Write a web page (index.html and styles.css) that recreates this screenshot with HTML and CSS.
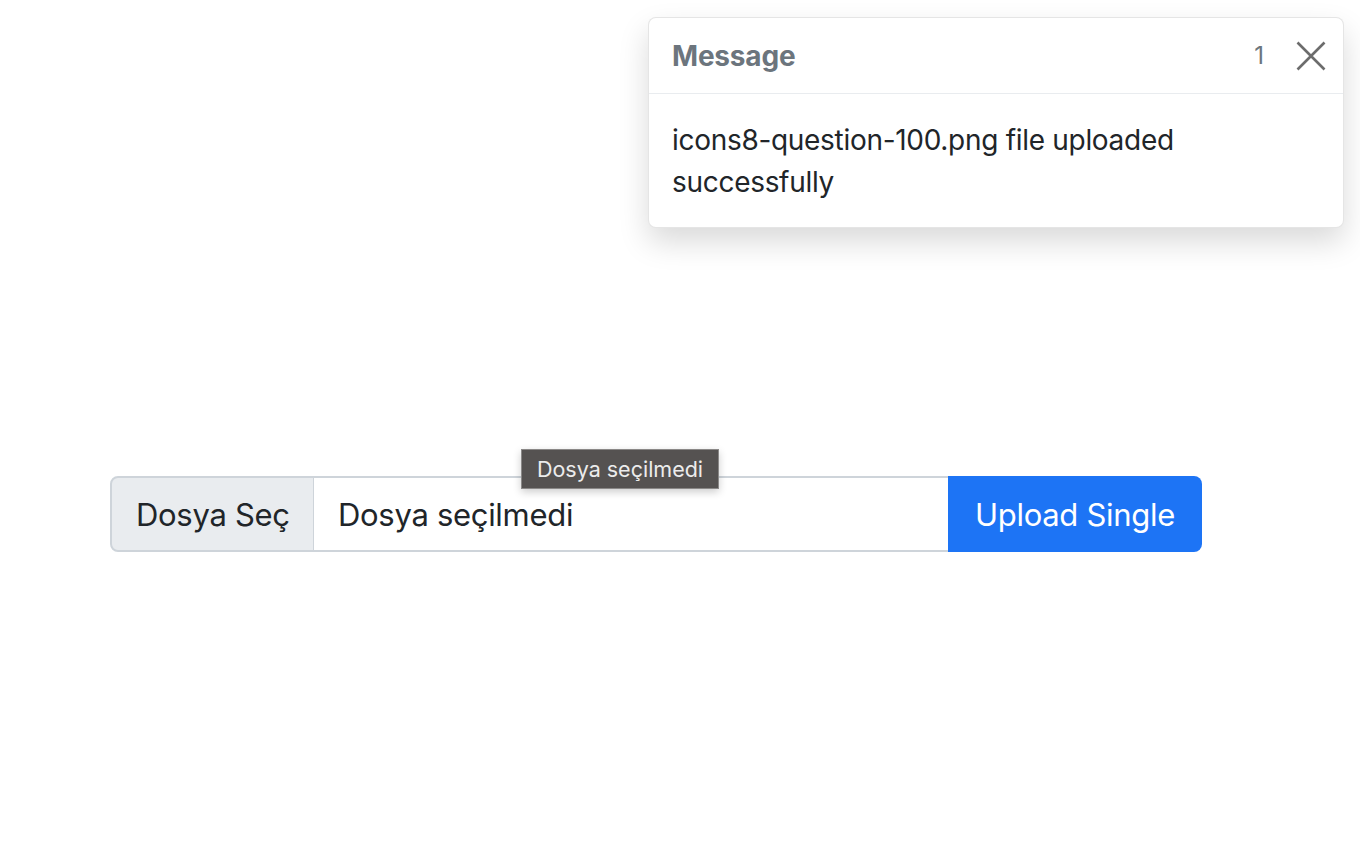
FILE: index.html
```html
<!DOCTYPE html>
<html lang="tr">
<head>
<meta charset="utf-8">
<title>Upload</title>
<link rel="stylesheet" href="styles.css">
</head>
<body>
<div class="toast-wrap">
  <div class="toast">
    <div class="toast-header">
      <strong class="toast-title">Message</strong>
      <small class="toast-count">1</small>
      <button class="btn-close" aria-label="Close">
        <svg width="30" height="30" viewBox="0 0 30 30"><path d="M1.5 1.5 L28.5 28.5 M28.5 1.5 L1.5 28.5" stroke="#6c6c6c" stroke-width="2.6" fill="none"/></svg>
      </button>
    </div>
    <div class="toast-body">icons8-question-100.png file uploaded successfully</div>
  </div>
</div>

<main class="main">
  <form class="input-group">
    <label class="file-btn">Dosya Seç</label>
    <div class="file-name">Dosya seçilmedi</div>
    <button type="button" class="btn-primary">Upload Single</button>
    <div class="tooltip">Dosya seçilmedi</div>
  </form>
</main>
</body>
</html>
```
FILE: styles.css
```css
* { box-sizing: border-box; }
html, body { margin: 0; padding: 0; }
body {
  width: 1360px;
  height: 856px;
  background: #fff;
  color: #212529;
  font-family: Inter, "Noto Sans", "Liberation Sans", sans-serif;
  position: relative;
  overflow: hidden;
}

.toast-wrap {
  position: absolute;
  top: 17px;
  right: 16px;
}
.toast {
  width: 696px;
  background: #fff;
  border: 1px solid rgba(0,0,0,0.1);
  border-radius: 8px;
  box-shadow: 0 14px 30px rgba(0,0,0,0.15);
}
.toast-header {
  display: flex;
  align-items: center;
  height: 76px;
  padding: 0 17px 0 23px;
  border-bottom: 1px solid #e9ecef;
  border-radius: 8px 8px 0 0;
}
.toast-title {
  font-size: 28px;
  font-weight: 700;
  color: #6c757d;
  margin-right: auto;
  letter-spacing: -0.2px;
}
.toast-count {
  font-size: 24px;
  color: #6c757d;
  margin-right: 32px;
}
.btn-close {
  border: 0;
  background: transparent;
  padding: 0;
  width: 30px;
  height: 30px;
  display: flex;
  cursor: pointer;
}
.toast-body {
  padding: 25px 60px 24px 23px;
  font-size: 28px;
  line-height: 42px;
  color: #212529;
  letter-spacing: -0.3px;
}

.main {
  padding: 476px 0 0 110px;
}
.input-group {
  position: relative;
  display: flex;
  width: 1092px;
  height: 76px;
  margin: 0;
}
.file-btn {
  display: flex;
  align-items: center;
  width: 204px;
  padding-left: 24px;
  background: #e9ecef;
  border: 2px solid #ced4da;
  border-right-width: 1px;
  border-radius: 8px 0 0 8px;
  font-size: 31px;
  color: #212529;
  letter-spacing: -0.3px;
}
.file-name {
  flex: 1;
  display: flex;
  align-items: center;
  padding-left: 24px;
  border: 2px solid #ced4da;
  border-left: 0;
  border-right: 0;
  font-size: 31px;
  color: #212529;
  letter-spacing: -0.3px;
}
.btn-primary {
  width: 254px;
  border: 0;
  border-radius: 0 8px 8px 0;
  background: #1d74f5;
  color: #fff;
  font-family: inherit;
  font-size: 31px;
  letter-spacing: -0.3px;
  padding: 0;
}
.tooltip {
  position: absolute;
  left: 411px;
  top: -27px;
  width: 198px;
  height: 40px;
  background: #555251;
  border: 1px solid #8a8887;
  box-shadow: 0 3px 8px rgba(0,0,0,0.2);
  color: #ececec;
  font-size: 21.5px;
  display: flex;
  align-items: center;
  justify-content: center;
  white-space: nowrap;
}
```
